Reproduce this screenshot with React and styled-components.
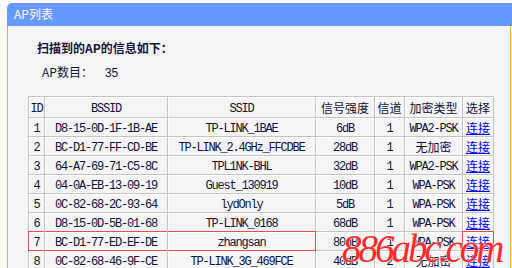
import React from "react";
import styled, { createGlobalStyle } from "styled-components";

const rows = [
  ["1", "D8-15-0D-1F-1B-AE", "TP-LINK_1BAE", "6dB", "1", "WPA2-PSK"],
  ["2", "BC-D1-77-FF-CD-BE", "TP-LINK_2.4GHz_FFCDBE", "28dB", "1", "无加密"],
  ["3", "64-A7-69-71-C5-8C", "TPL1NK-BHL", "32dB", "1", "WPA2-PSK"],
  ["4", "04-0A-EB-13-09-19", "Guest_130919", "10dB", "1", "WPA-PSK"],
  ["5", "0C-82-68-2C-93-64", "lydOnly", "5dB", "1", "WPA-PSK"],
  ["6", "D8-15-0D-5B-01-68", "TP-LINK_0168", "68dB", "1", "WPA-PSK"],
  ["7", "BC-D1-77-ED-EF-DE", "zhangsan", "80dB", "1", "WPA-PSK"],
  ["8", "0C-82-68-46-9F-CE", "TP-LINK_3G_469FCE", "40dB", "2", "无加密"],
];

const widths = [16, 123, 148, 59, 30, 58, 31];
const heads = ["ID", "BSSID", "SSID", "信号强度", "信道", "加密类型", "选择"];
const isLatin = (s) => /^[\x00-\x7f]+$/.test(s);

export default function App() {
  return (
    <>
      <GlobalStyle />
      <Page>
        <Panel>
          <Header>AP列表</Header>
          <Body>
            <Intro>扫描到的AP的信息如下：</Intro>
            <Count>
              AP数目：<Num>35</Num>
            </Count>
            <Table>
              <colgroup>
                {widths.map((w, i) => (
                  <col key={i} style={{ width: w }} />
                ))}
              </colgroup>
              <thead>
                <tr>
                  {heads.map((h) => (
                    <Th key={h}>{isLatin(h) ? <Mono>{h}</Mono> : h}</Th>
                  ))}
                </tr>
              </thead>
              <tbody>
                {rows.map((r) => {
                  const hot = r[0] === "7";
                  return (
                    <tr key={r[0]}>
                      {r.map((v, i) => (
                        <Td
                          key={i}
                          $mark={hot && i < 3 ? ["left", "mid", "right"][i] : null}
                        >
                          {isLatin(v) ? <Mono>{v}</Mono> : v}
                        </Td>
                      ))}
                      <Td $mark={hot ? "all" : null}>
                        <Link href="#">连接</Link>
                      </Td>
                    </tr>
                  );
                })}
              </tbody>
            </Table>
          </Body>
        </Panel>
        <Watermark>886abc.com</Watermark>
      </Page>
    </>
  );
}

const GlobalStyle = createGlobalStyle`
  body {
    margin: 0;
    background: #ffffff;
    font-family: "Noto Sans CJK SC", sans-serif;
    font-size: 12px;
  }
`;

const Page = styled.div`
  position: relative;
  width: 512px;
  height: 268px;
  overflow: hidden;
  padding: 3px 0 0 7px;
  box-sizing: border-box;
`;

const Panel = styled.div`
  width: 505px;
`;

const Header = styled.div`
  height: 23px;
  line-height: 22px;
  padding-left: 7px;
  background: #6699ff;
  border-top-left-radius: 5px;
  color: #ffffff;
  font-size: 12px;
`;

const Body = styled.div`
  width: 504px;
  box-sizing: border-box;
  min-height: 260px;
  background: #f5f5f5;
  border-left: 1px solid #f0a848;
  border-right: 1px solid #f0a848;
  padding: 14px 0 0 20px;
`;

const Intro = styled.div`
  padding-left: 9px;
  height: 16px;
  line-height: 16px;
  font-weight: bold;
  color: #14143c;
`;

const Count = styled.div`
  margin-top: 8px;
  padding-left: 14px;
  height: 16px;
  line-height: 16px;
  color: #14143c;
`;

const Num = styled.span`
  margin-left: 12px;
  font-family: "Liberation Sans", sans-serif;
`;

const Table = styled.table`
  margin-top: 16px;
  border-collapse: collapse;
  table-layout: fixed;
  width: 466px;
  border: 1px solid #bdbdbd;
  color: #10103a;
`;

const Th = styled.th`
  height: 20px;
  padding: 0;
  font-weight: normal;
  text-align: center;
  white-space: nowrap;
  border: 1px solid #c4c4c4;
  box-shadow: inset 1px 1px 0 #ffffff;
`;

const Td = styled.td`
  position: relative;
  height: 18px;
  padding: 0;
  text-align: center;
  white-space: nowrap;
  border: 1px solid #c4c4c4;
  box-shadow: inset 1px 1px 0 #ffffff;

  &::after {
    content: "";
    display: ${(p) => (p.$mark ? "block" : "none")};
    position: absolute;
    top: -1px;
    bottom: -1px;
    left: ${(p) => (p.$mark === "left" || p.$mark === "all" ? "-1px" : "0")};
    right: ${(p) => (p.$mark === "right" || p.$mark === "all" ? "-1px" : "0")};
    border-top: 1px solid #e05050;
    border-bottom: 1px solid #e05050;
    border-left: ${(p) =>
      p.$mark === "left" || p.$mark === "all" ? "1px solid #e05050" : "none"};
    border-right: ${(p) =>
      p.$mark === "right" || p.$mark === "all" ? "1px solid #e05050" : "none"};
    pointer-events: none;
  }
`;

const Mono = styled.span`
  font-family: "Liberation Mono", monospace;
  font-size: 12px;
  letter-spacing: -1.2px;
`;

const Link = styled.a`
  color: #0000ee;
  text-decoration: underline;
`;

const Watermark = styled.span`
  position: absolute;
  left: 342px;
  top: 226px;
  font-family: "Liberation Serif", serif;
  font-style: italic;
  font-size: 39px;
  letter-spacing: -3px;
  color: #ff2a2a;
  text-shadow: 0 0 2px #ffffff, 0 0 1px #ffffff;
  pointer-events: none;
`;
